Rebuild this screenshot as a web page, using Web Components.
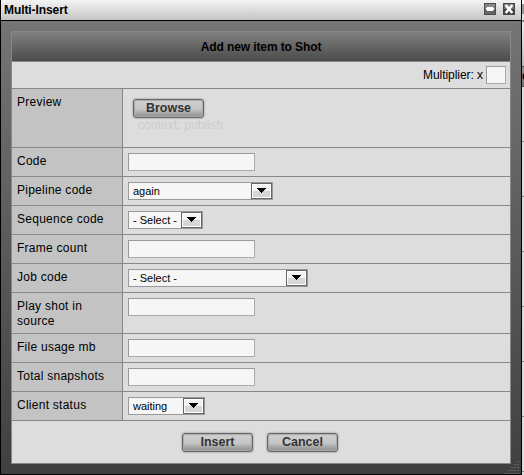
<!DOCTYPE html>
<html lang="en"><head><meta charset="utf-8"><title>Multi-Insert</title>
<style>
html,body{margin:0;height:475px;overflow:hidden}
body{width:524px;font-family:"Liberation Sans",Arial,sans-serif;font-size:12px;color:#000;background:#ddd}
</style></head><body>
<page-shell></page-shell>
<script>
const define=(name,html)=>{
  const t=document.createElement('template');t.innerHTML=html;
  customElements.define(name,class extends HTMLElement{
    constructor(){super();this.attachShadow({mode:'open'}).append(t.content.cloneNode(true));}
    connectedCallback(){
      for(const a of ['w','t','h'])if(this.hasAttribute(a))this.style.setProperty('--'+a,this.getAttribute(a)+'px');
    }
  });
};
define('text-field',`<style>:host{display:block;box-sizing:border-box;width:var(--w,127px);height:18px;border:1px solid #999;border-right-color:#aaa;border-bottom-color:#aaa;background:#f6f6f6}</style>`);
define('select-box',`<style>
:host{display:flex;box-sizing:border-box;width:var(--w);height:18px;border:1px solid #999;background:#f6f6f6;font-size:11px;line-height:17px}
span{flex:1;padding-left:4px;white-space:nowrap}
i{box-sizing:border-box;width:21px;height:16px;border:1px solid #666;box-shadow:inset 0 0 0 1px #fff;background:linear-gradient(#f4f4f4 50%,#d6d6d6 50%);display:flex;justify-content:center;padding-top:4px}
svg{display:block}
</style><span><slot></slot></span><i><svg width="9" height="5" shape-rendering="crispEdges"><path d="M0 0h9v1H8v1H7v1H6v1H5v1H4V4H3V3H2V2H1V1H0z"/></svg></i>`);
define('push-button',`<style>
:host{display:flex;align-items:center;justify-content:center;box-sizing:border-box;width:71px;height:19px;border:1px solid #666;border-radius:3px;font-weight:bold;font-size:12.5px;line-height:17px;color:#333;background:linear-gradient(#d0d0d0,#c5c5c5 55%,#a8a8a8 75%,#8c8c8c);box-shadow:0 0 2px #777,inset 0 0 1px 1px #aaa}
</style><slot></slot>`);
define('form-row',`<style>
:host{display:flex;box-sizing:border-box;height:var(--h,29px);border-bottom:1px solid #888}
.label{box-sizing:border-box;width:111px;border-right:1px solid #888;background:#c3c3c3;padding:6px 5px 0;line-height:15px;letter-spacing:.26px}
.value{flex:1;padding:5px 5px 0}
</style><div class="label"><slot name="label"></slot></div><div class="value"><slot></slot></div>`);
define('upload-field',`<style>:host{display:block;padding:5px 0 0 5px}div{margin:1px 0 0 5px;color:#ccc;line-height:13px;letter-spacing:.1px}</style><push-button>Browse</push-button><div>context: publish</div>`);
define('item-form',`<style>
:host{display:block;box-sizing:border-box;width:500px;height:433px;border:1px solid #888;background:#ddd}
header{height:29px;line-height:31px;text-align:center;font-weight:bold;letter-spacing:-.1px;background:linear-gradient(#808080,#4b4b4b);border-bottom:1px solid #888}
.mult{height:26px;display:flex;justify-content:flex-end;align-items:center;gap:3px;padding-right:4px;border-bottom:1px solid #888;letter-spacing:-.05px}
footer{display:flex;justify-content:center;gap:14px;padding:12px 2px 0 0}
</style>
<header>Add new item to Shot</header>
<div class="mult"><span>Multiplier: x</span><text-field w="20"></text-field></div>
<form-row h="59"><span slot="label">Preview</span><upload-field></upload-field></form-row>
<form-row><span slot="label">Code</span><text-field></text-field></form-row>
<form-row><span slot="label">Pipeline code</span><select-box w="145">again</select-box></form-row>
<form-row><span slot="label">Sequence code</span><select-box w="75">- Select -</select-box></form-row>
<form-row><span slot="label">Frame count</span><text-field></text-field></form-row>
<form-row><span slot="label">Job code</span><select-box w="180">- Select -</select-box></form-row>
<form-row h="41"><span slot="label">Play shot in source</span><text-field></text-field></form-row>
<form-row><span slot="label">File usage mb</span><text-field></text-field></form-row>
<form-row><span slot="label">Total snapshots</span><text-field></text-field></form-row>
<form-row><span slot="label">Client status</span><select-box w="77">waiting</select-box></form-row>
<footer><push-button>Insert</push-button><push-button>Cancel</push-button></footer>`);
define('title-bar',`<style>
:host{display:flex;align-items:center;height:20px;padding:0 6px 0 3px;border-bottom:1px solid #000;background:linear-gradient(#f4f4f4,#c4c4c4);font-weight:bold}
span{flex:1;line-height:20px;letter-spacing:-.08px}svg{display:block;margin:-2px 0 0 7px}
</style><span><slot></slot></span>
<svg width="12" height="12" shape-rendering="crispEdges"><path fill="#4c4c4c" d="M0 0h12v12H0z"/><path fill="#888" d="M1 1h10v5H1z"/><path fill="#666" d="M1 6h10v5H1z"/><path fill="#fff" d="M3 4h6v1h1v2H9v1H3V7H2V5h1z"/></svg>
<svg width="12" height="12"><path fill="#444" d="M0 0h12v12H0z"/><path fill="#777" d="M1 1h10v5H1z"/><path stroke="#fff" stroke-width="2.6" d="M2.7 2l6.6 8M9.3 2l-6.6 8"/></svg>`);
define('dialog-window',`<style>
:host{display:block;box-sizing:border-box;width:522px;height:475px;border:solid #000;border-width:0 1px 1px;background:linear-gradient(#777,#404040);position:relative}
item-form{margin:10px 0 0 10px}
svg{position:absolute;right:1px;bottom:0}
</style><title-bar>Multi-Insert</title-bar><item-form></item-form>
<svg width="15" height="13" shape-rendering="crispEdges" fill="#626262"><path d="M12 0h2v1h-2zM9 3h2v1H9zM12 3h2v1h-2zM6 6h2v1H6zM9 6h2v1H9zM12 6h2v1h-2zM3 9h2v1H3zM6 9h2v1H6zM9 9h2v1H9zM12 9h2v1h-2zM0 12h2v1H0zM3 12h2v1H3zM6 12h2v1H6zM9 12h2v1H9zM12 12h2v1h-2z"/></svg>`);
define('page-edge',`<style>
:host{display:block;width:2px;height:475px;overflow:hidden;background:#ddd}
.tab{height:4px;background:#f4f4f4}
.bar{height:10px;background:#999}
.gap{height:6px;background:#e4e4e4}
.rule{height:2px;background:#888}
.fade{height:44px;background:linear-gradient(#f0f0f0,#b8b8b8)}
.head{box-sizing:border-box;height:21px;border:solid #555;border-width:1px 0;background:linear-gradient(#909090,#777);font-weight:bold;line-height:19px}
.rows{height:388px;background:repeating-linear-gradient(#ddd 0 54px,#888 54px 55px)}
</style><div class="tab"></div><div class="bar"></div><div class="gap"></div><div class="rule"></div><div class="fade"></div><div class="head">c</div><div class="rows"></div>`);
define('page-shell',`<style>:host{display:flex}</style><dialog-window></dialog-window><page-edge></page-edge>`);
</script></body></html>
